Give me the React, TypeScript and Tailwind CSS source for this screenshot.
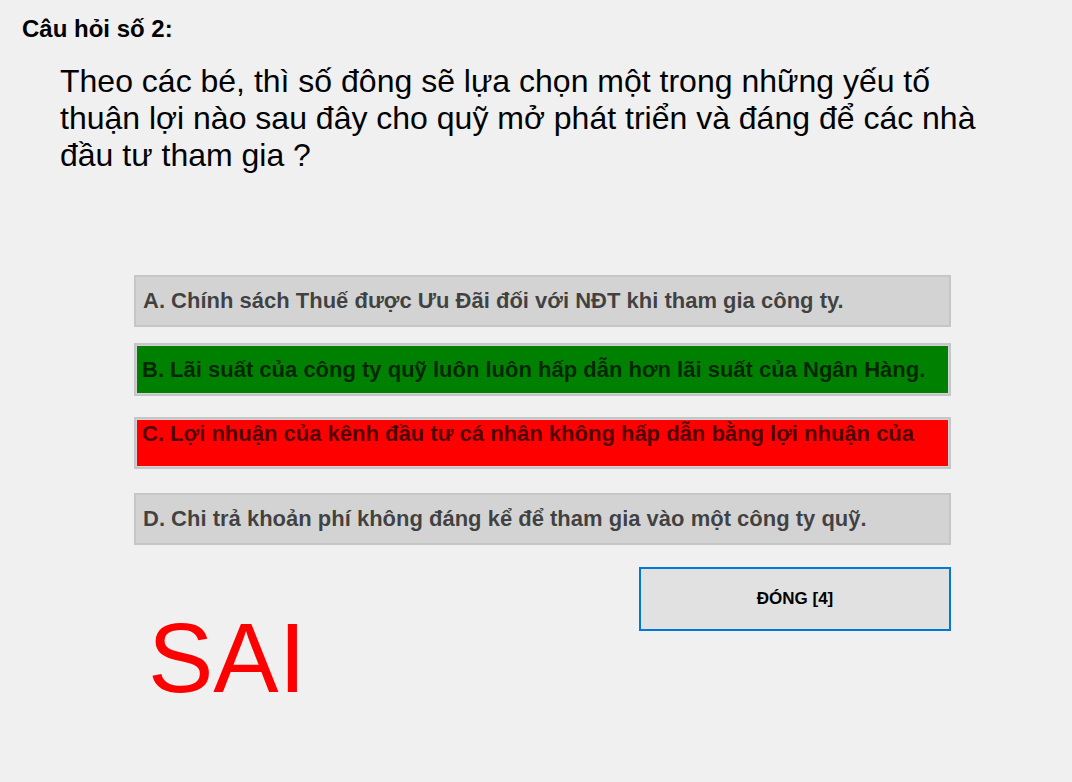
import React from "react";

const font = { fontFamily: '"Liberation Sans", Arial, sans-serif' };

function Option({ label }: { label: string }) {
  return (
    <div className="w-[817px] h-[52px] border-2 border-[#c6c6c6] bg-[#d3d3d3] flex items-center px-[7px]">
      <div className="text-[22px] leading-[26px] font-bold text-black/70 whitespace-nowrap">{label}</div>
    </div>
  );
}

export default function App() {
  return (
    <div className="w-[1072px] h-[782px] bg-[#f0f0f0] flex flex-col" style={font}>
      <div className="pl-[22px] pt-[17px] text-[24px] leading-[24px] font-bold text-black">Câu hỏi số 2:</div>
      <div className="pl-[60px] pt-[22px] w-[1060px] text-[32px] leading-[37px] text-black">
        Theo các bé, thì số đông sẽ lựa chọn một trong những yếu tố
        <br />
        thuận lợi nào sau đây cho quỹ mở phát triển và đáng để các nhà
        <br />
        đầu tư tham gia ?
      </div>
      <div className="pl-[134px] pt-[101px] flex flex-col">
        <Option label="A. Chính sách Thuế được Ưu Đãi đối với NĐT khi tham gia công ty." />
        <div className="mt-[16px]">
          <div className="w-[817px] h-[53px] border-2 border-[#c6c6c6] bg-[#d3d3d3] p-[1px]">
            <div className="w-full h-full bg-[#008000] flex items-center px-[5px]">
              <div className="text-[22px] leading-[26px] font-bold text-black/70 whitespace-nowrap">B. Lãi suất của công ty quỹ luôn luôn hấp dẫn hơn lãi suất của Ngân Hàng.</div>
            </div>
          </div>
        </div>
        <div className="mt-[21px]">
          <div className="w-[817px] h-[52px] border-2 border-[#c6c6c6] bg-[#d3d3d3] p-[1px]">
            <div className="w-full h-full bg-[#ff0000] flex items-start pt-[1px] px-[5px]">
              <div className="text-[22px] leading-[26px] font-bold text-black/70 whitespace-nowrap">C. Lợi nhuận của kênh đầu tư cá nhân không hấp dẫn bằng lợi nhuận của</div>
            </div>
          </div>
        </div>
        <div className="mt-[24px]">
          <Option label="D. Chi trả khoản phí không đáng kể để tham gia vào một công ty quỹ." />
        </div>
      </div>
      <div className="pl-[639px] pt-[22px]">
        <div className="w-[312px] h-[64px] border-2 border-[#0078d7] bg-[#e1e1e1] flex items-center justify-center text-[17px] font-bold text-black">
          ĐÓNG [4]
        </div>
      </div>
      <div className="pl-[148px] -mt-[28px] text-[98px] leading-[110px] text-[#ff0000]">SAI</div>
    </div>
  );
}
